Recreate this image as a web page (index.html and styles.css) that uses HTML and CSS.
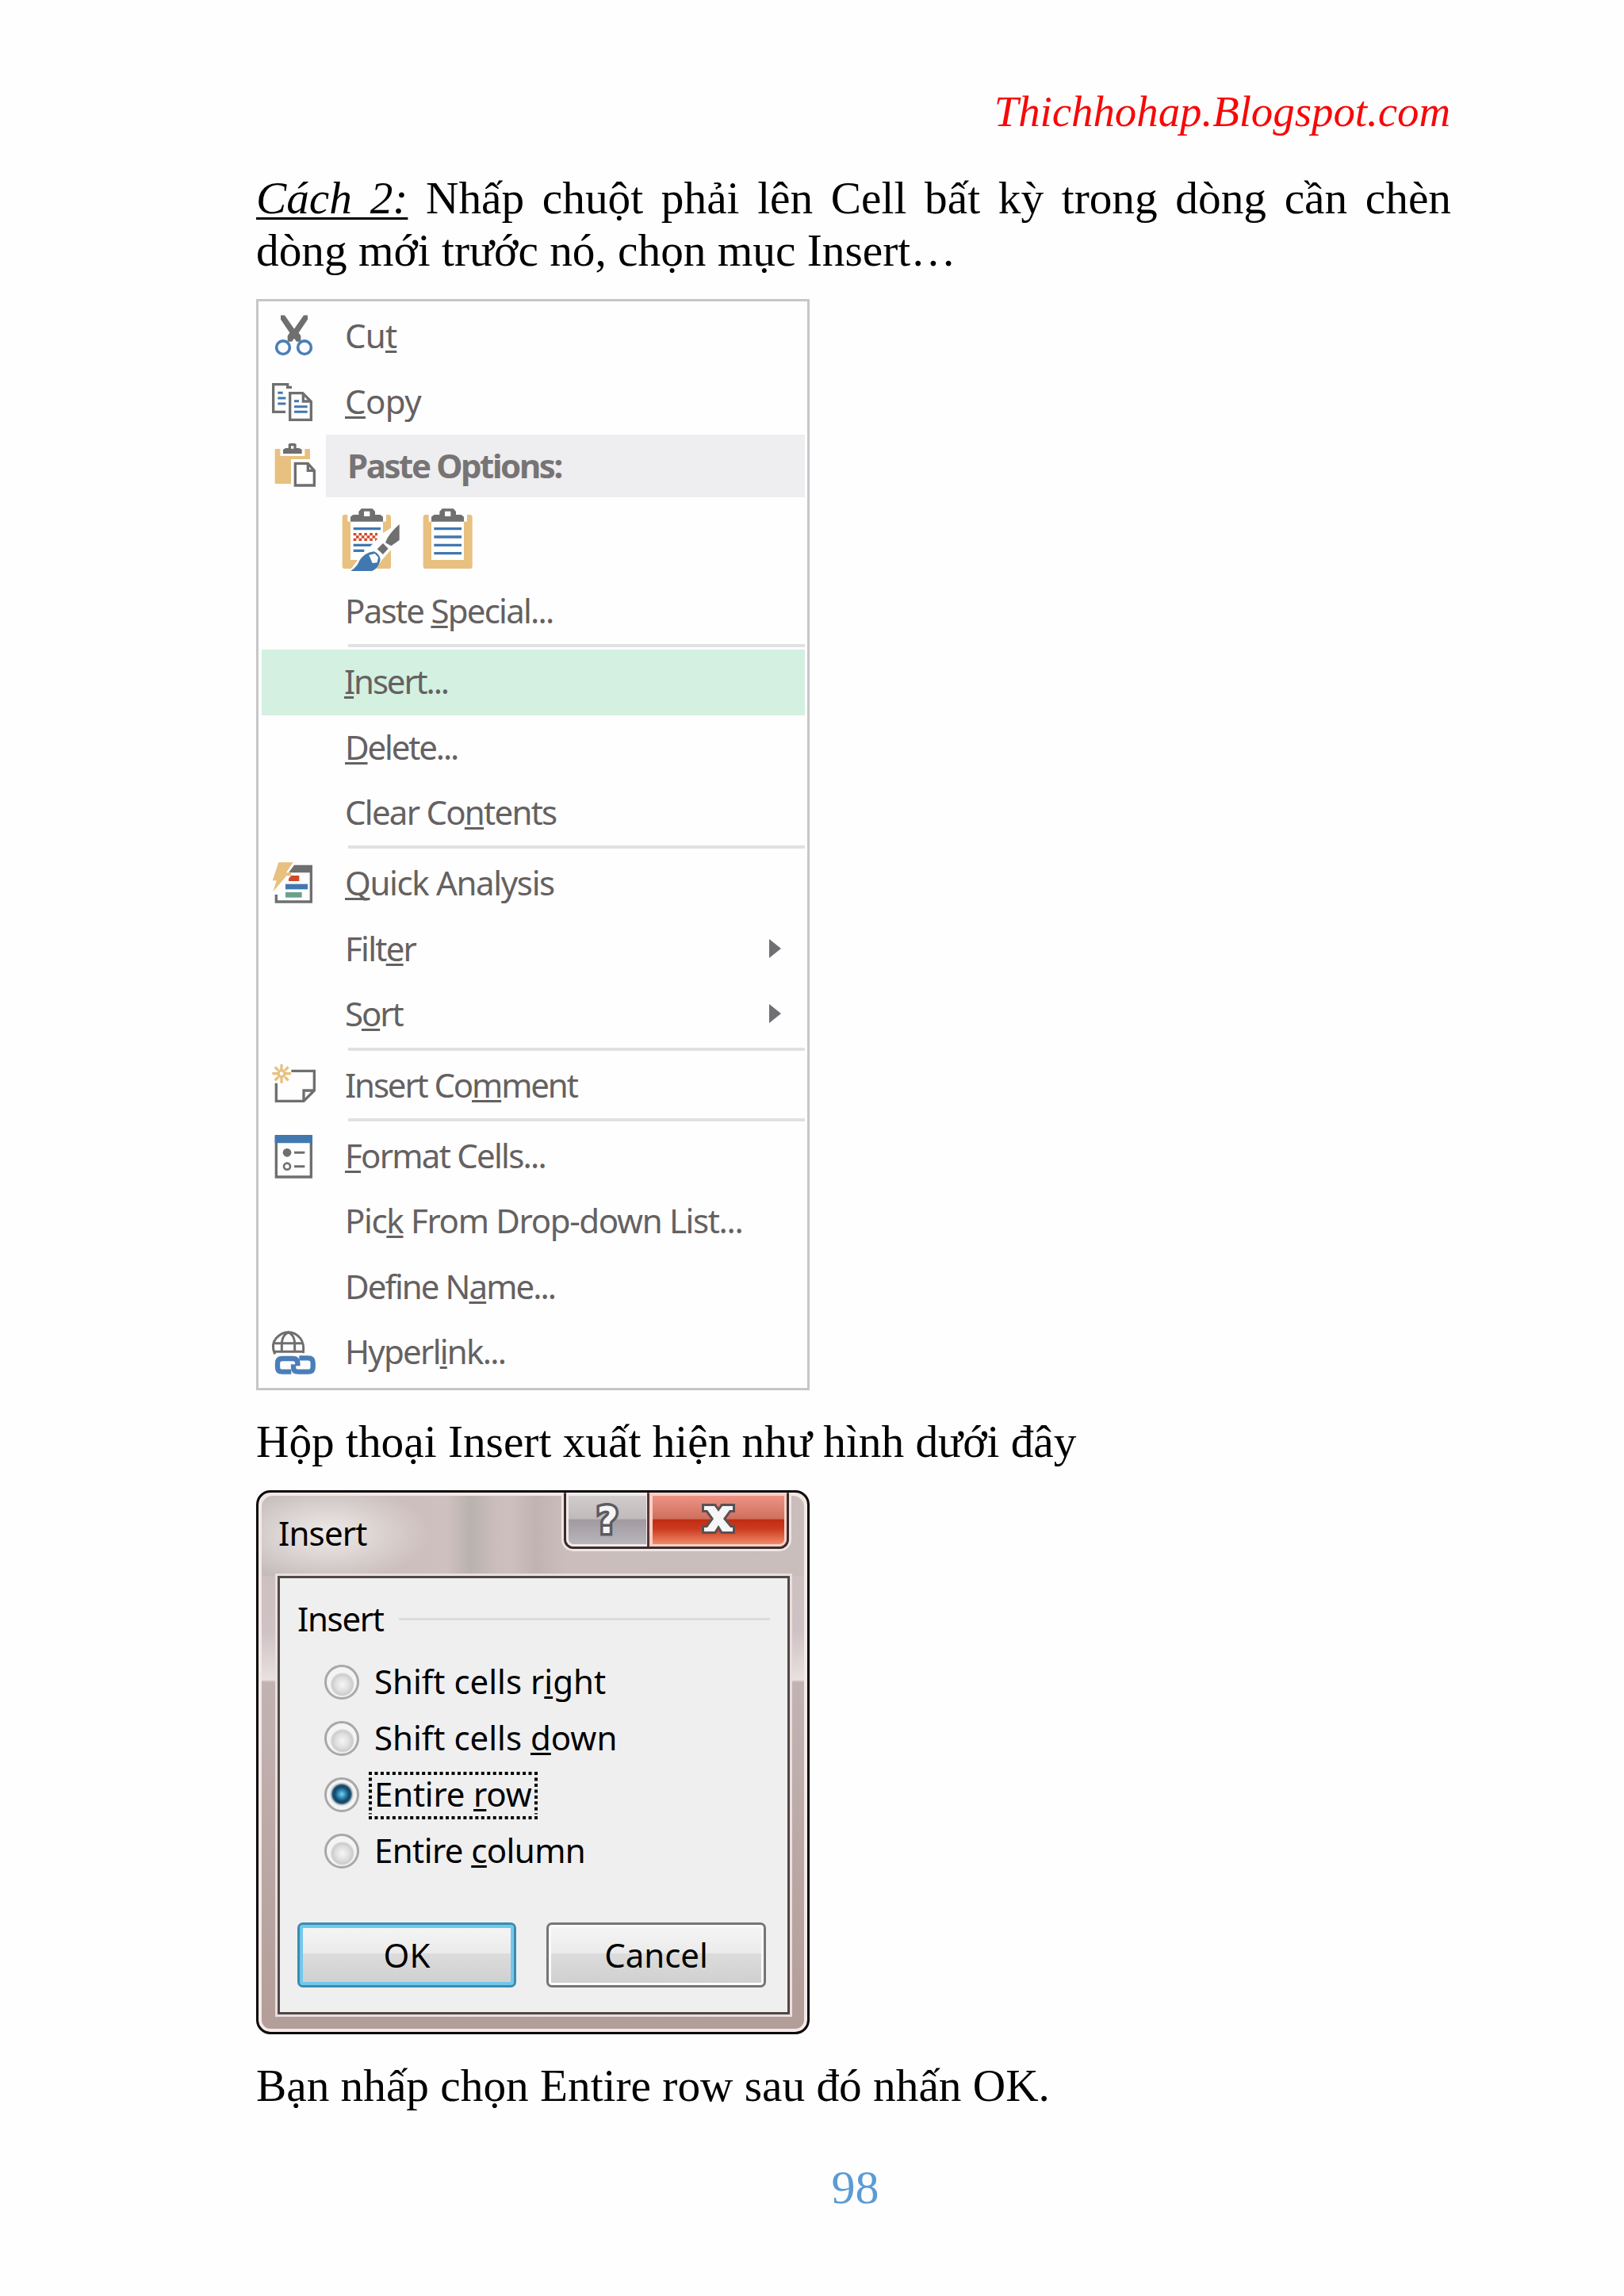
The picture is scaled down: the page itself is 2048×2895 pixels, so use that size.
FILE: index.html
```
<!DOCTYPE html>
<html lang="vi">
<head>
<meta charset="utf-8">
<title>Thichhohap.Blogspot.com</title>
<link rel="stylesheet" href="styles.css">
</head>
<body>
<main class="page">
  <header class="site">Thichhohap.Blogspot.com</header>
  <p class="para step">
    <span class="line justified"><em class="lead">Cách 2:</em> Nhấp chuột phải lên Cell bất kỳ trong dòng cần chèn</span>
    <span class="line">dòng mới trước nó, chọn mục Insert…</span>
  </p>

  <section class="menu">
    <div class="item">
      <svg class="icon" viewBox="48 40.5 246 246">
        <path d="M132 84h15l36 52 36-52h15v16l-34 50 8 12v22h-16l-9-12-9 12h-16v-22l8-12-34-50z" fill="#6f6f6f"/>
        <circle cx="141" cy="206" r="25" fill="none" stroke="#4a7eb8" stroke-width="11"/>
        <circle cx="222" cy="206" r="25" fill="none" stroke="#4a7eb8" stroke-width="11"/>
      </svg>
      <span class="label s-a">Cu<u>t</u></span>
    </div>
    <div class="item">
      <svg class="icon" viewBox="48 288 246 246">
        <g fill="none" stroke="#6f6f6f" stroke-width="10">
          <path d="M150 448H104V344h54v11h16"/>
          <path d="M167 377h48l32 32v69h-80z M217 377v31h30"/>
        </g>
        <path d="M121 376h19M121 396h30M121 417h30M183 407h18M183 428h50M183 448h50" stroke="#4178b0" stroke-width="9"/>
      </svg>
      <span class="label s-f"><u>C</u>opy</span>
    </div>
    <div class="item heading">
      <svg class="icon" viewBox="48 534 246 237">
        <path d="M114 588h16v27h93v-27h16q4 0 4 4v35h-72v93h-57q-4 0-4-4V592q0-4 4-4z" fill="#e8c080"/>
        <path d="M141 606v-16l10-5h10v-14l5-4h20l5 4v14h10l11 5v16z M171 577v10h10v-10z" fill="#6f6f6f" fill-rule="evenodd"/>
        <path d="M187 643h48l24 27v56h-72z M235 643v27h24" fill="#fff" stroke="#6f6f6f" stroke-width="10"/>
      </svg>
      <span class="label">Paste Options:</span>
    </div>
    <div class="choices">
      <svg class="choice" viewBox="360 810 230 245">
        <path d="M375 837h10v26h146v-26h8q10 0 10 10v184q0 10-10 10H375q-10 0-10-10V847q0-10 10-10z" fill="#e8c080"/>
        <path d="M396 862h123v146H396z" fill="#fff"/>
        <path d="M396 863v-18l10-8h21v-12l10-11h42l10 11v12h20l10 8v18z M447 824v19h22v-19z" fill="#6f6f6f" fill-rule="evenodd"/>
        <path d="M407 890h103M407 952h81M407 973h41" stroke="#4178b0" stroke-width="10"/>
        <path d="M407 911h91M407 931h91" stroke="#d2492a" stroke-width="10" stroke-dasharray="11 9.5"/>
        <path d="M417 921h81" stroke="#d2492a" stroke-width="10" stroke-dasharray="11 9.5"/>
        <path d="M390 1052L430 1000 520 905 581 868 592 940 512 1015 478 1052z" fill="#fff"/>
        <path d="M515 1008l34-38v61q0 10-10 10h-42z" fill="#e8c080"/>
        <path d="M581 873v60l-31 22-22-12q10-32 53-70z M519 945l20 20-20 22-22-20z" fill="#6f6f6f"/>
        <path d="M397 1050q28-20 32-38 20-32 55-36 24 9 25 32-8 34-32 42z" fill="#4178b0"/>
        <path d="M466 990l22-6 13 14-4 20-18 2z" fill="#fff"/>
      </svg>
      <svg class="choice" viewBox="667 810 230 245">
        <path d="M682 837h11v26h145v-26h10q10 0 10 10v184q0 10-10 10H682q-10 0-10-10V847q0-10 10-10z" fill="#e8c080"/>
        <path d="M703 862h123v146H703z" fill="#fff"/>
        <path d="M703 863v-18l10-8h21v-12l10-11h42l10 11v12h20l10 8v18z M754 824v19h22v-19z" fill="#6f6f6f" fill-rule="evenodd"/>
        <path d="M713 890h104M713 921h104M713 952h104M713 983h104" stroke="#4178b0" stroke-width="10"/>
      </svg>
    </div>
    <div class="item"><span class="label s-c">Paste <u>S</u>pecial...</span></div>
    <hr class="rule">
    <div class="item selected"><span class="label s-d"><u>I</u>nsert...</span></div>
    <div class="item"><span class="label s-d"><u>D</u>elete...</span></div>
    <div class="item"><span class="label s-c">Clear Co<u>n</u>tents</span></div>
    <hr class="rule">
    <div class="item">
      <svg class="icon" viewBox="48 9 246 246">
        <path d="M115 174v27h132V76" fill="none" stroke="#6f6f6f" stroke-width="10"/>
        <path d="M183 62h69v29h-90z" fill="#6f6f6f"/>
        <path d="M124 52h55l-26 39h18v12h-17l-51 60 13-42h-15z" fill="#e8c080"/>
        <path d="M172 102h30v21h-40v-10z" fill="#cf4a28"/>
        <path d="M150 134h84v20h-84z" fill="#4178b0"/>
        <path d="M150 165h62v20h-62z" fill="#69a28c"/>
      </svg>
      <span class="label s-b"><u>Q</u>uick Analysis</span>
    </div>
    <div class="item"><span class="label s-c">Filt<u>e</u>r</span><i class="arrow"></i></div>
    <div class="item"><span class="label s-d">S<u>o</u>rt</span><i class="arrow"></i></div>
    <hr class="rule">
    <div class="item">
      <svg class="icon" viewBox="48 771 246 246">
        <path d="M172 838h87v74l-40 40H115v-68 M259 912h-40v40" fill="none" stroke="#6f6f6f" stroke-width="10"/>
        <path d="M135 813v71M100 848h71M110 823l13 13M148 861l13 13M161 823l-13 13M123 861l-13 13" stroke="#e8c080" stroke-width="10"/>
        <circle cx="135" cy="848" r="12" fill="#fff" stroke="#e8c080" stroke-width="10"/>
      </svg>
      <span class="label s-d">Insert Co<u>m</u>ment</span>
    </div>
    <hr class="rule">
    <div class="item">
      <svg class="icon" viewBox="48 18 246 246">
        <path d="M115 70h132v149H115z" fill="none" stroke="#6f6f6f" stroke-width="10"/>
        <path d="M110 60h142v31H110z" fill="#4178b0"/>
        <path d="M183 127h40M183 179h40" stroke="#6f6f6f" stroke-width="9"/>
        <circle cx="156" cy="127" r="16" fill="#6f6f6f"/>
        <circle cx="156" cy="179" r="12" fill="none" stroke="#6f6f6f" stroke-width="8"/>
      </svg>
      <span class="label s-c"><u>F</u>ormat Cells...</span>
    </div>
    <div class="item"><span class="label s-b">Pic<u>k</u> From Drop-down List...</span></div>
    <div class="item"><span class="label s-g">Define N<u>a</u>me...</span></div>
    <div class="item">
      <svg class="icon" viewBox="48 759 246 246">
        <g fill="none" stroke="#6f6f6f" stroke-width="9">
          <path d="M110 889q-16-36 5-60 20-23 46-23t45 23q16 20 11 56"/>
          <path d="M106 848h110M106 880h114M136 883v-38q4-30 25-38 21 8 24 38v38"/>
        </g>
        <g fill="none" stroke="#4a7eb8" stroke-width="19">
          <path d="M172 956h-34q-18 0-18-18v-14q0-18 18-18h40q18 0 18 18v10"/>
          <path d="M202 904h34q18 0 18 18v16q0 18-18 18h-38q-18 0-18-18v-10"/>
        </g>
      </svg>
      <span class="label s-c">Hyperl<u>i</u>nk...</span>
    </div>
  </section>

  <p class="para">Hộp thoại Insert xuất hiện như hình dưới đây</p>

  <section class="dialog">
    <div class="titlebar">
      <span class="title">Insert</span>
      <div class="caption">
        <span class="help">?</span>
        <span class="close">
          <svg class="cross" viewBox="0 0 42 38"><path d="M3 3h13l5 7 5-7h13v5h-4l-8 11 9 11h3v5H26l-5-8-5 8H3v-5h4l8-11L7 8H3z" fill="#f6f6f6" stroke="#5b5052" stroke-width="6" paint-order="stroke"/></svg>
        </span>
      </div>
    </div>
    <div class="panel">
      <div class="legend"><span>Insert</span><i></i></div>
      <div class="radio"><b class="dot"></b><span class="name">Shift cells r<u>i</u>ght</span></div>
      <div class="radio"><b class="dot"></b><span class="name">Shift cells <u>d</u>own</span></div>
      <div class="radio"><b class="dot on"></b><span class="name s-e">Entire <u>r</u>ow<svg class="focus" viewBox="0 0 213 60"><path d="M0 2h213M0 58h213M2 7.5v46M211 7.5v46" stroke="#000" stroke-width="4" stroke-dasharray="4 3.464"/></svg></span></div>
      <div class="radio"><b class="dot"></b><span class="name s-f">Entire <u>c</u>olumn</span></div>
      <div class="actions">
        <button class="btn primary">OK</button>
        <button class="btn">Cancel</button>
      </div>
    </div>
  </section>

  <p class="para">Bạn nhấp chọn Entire row sau đó nhấn OK.</p>
  <footer class="folio">98</footer>
</main>
</body>
</html>
```
FILE: styles.css
```
* { box-sizing: border-box; }

body {
  margin: 0;
  background: #fefefe;
  color: #000;
  font-family: "Liberation Serif", serif;
}

.page {
  width: 2048px;
  height: 2895px;
  padding: 108.4px 218px 0 323px;
  overflow: hidden;
}

.site {
  padding-right: 1px;
  font-size: 54.8px;
  line-height: 66px;
  font-style: italic;
  text-align: right;
  color: #f80808;
}

.para {
  margin: 0;
  font-size: 57.3px;
  line-height: 66px;
  white-space: nowrap;
}

.step { margin-top: 42.6px; }
.line { display: block; }
.justified { text-align: justify; text-align-last: justify; white-space: normal; }

.lead {
  text-decoration: underline;
  text-decoration-thickness: 3px;
  text-underline-offset: 5px;
  text-decoration-skip-ink: none;
}

/* context menu */
.menu {
  width: 698px;
  height: 1376px;
  margin: 28px 0 31.7px;
  padding: 3.5px 3px 0;
  border: 3px solid #c6c6c8;
  background: #fefefe;
  font-family: "Noto Sans", "Open Sans", sans-serif;
  font-size: 42px;
  color: #656161;
}

.menu u, .dialog u {
  text-decoration-thickness: 3px;
  text-underline-offset: 3px;
  text-decoration-skip-ink: none;
}

.item {
  display: grid;
  grid-template-columns: 82px 1fr auto;
  height: 82.4px;
  margin: 0 0 0 -3px;
}

.icon { width: 82px; height: 82px; grid-column: 1; }

.label {
  grid-column: 2;
  padding-left: 27px;
  line-height: 79px;
  white-space: pre;
}

.s-a { letter-spacing: -.8px; }
.s-b { letter-spacing: -1.35px; }
.s-c { letter-spacing: -1.75px; }
.s-d { letter-spacing: -2.15px; }
.s-e { letter-spacing: -.2px; }
.s-f { letter-spacing: -.6px; }
.s-g { letter-spacing: -1.95px; }

.heading { height: 79px; }
.heading .icon { height: 79px; }
.heading .label {
  margin-left: 3px;
  background: #eeedef;
  color: #767474;
  font-weight: 700;
  line-height: 77.5px;
  letter-spacing: -2.4px;
}

.choices {
  display: flex;
  gap: 25.6px;
  height: 102.5px;
  padding: 13px 0 0 101px;
}

.choice { width: 76.7px; height: 81.7px; }

.rule {
  height: 4px;
  margin: 0 0 3px 110px;
  border: 0;
  background: #e1e0e3;
}

.selected { margin-left: 1px; background: #d3f0e1; }
.selected .label { margin-left: -5px; }

.arrow {
  align-self: start;
  margin: 28px 30px 0 0;
  border-style: solid;
  border-width: 12px 0 12px 15px;
  border-color: transparent transparent transparent #707074;
}

/* Insert dialog */
.dialog {
  width: 698px;
  height: 686px;
  margin: 28.7px 0 31.6px;
  padding: 0 22px 22px 24px;
  border: 3px solid #0c0a0a;
  border-radius: 18px;
  background: linear-gradient(#c3b8b6 0, #cdc0bf 90px, #cfc2c5 175px, #e8e1df 236px, #c2b3b3 239px, #b39d98 100%);
  box-shadow: inset 0 0 0 4px #f4e9e7;
  font-family: "Noto Sans", "Open Sans", sans-serif;
  font-size: 42px;
}

.titlebar {
  display: flex;
  justify-content: space-between;
  height: 105px;
  margin: 0 -18px 0 -20px;
  padding: 0 19px 0 21px;
  background:
    radial-gradient(ellipse 130px 62px at 82px 52px, #eeeae8 0, #eeeae800 100%),
    linear-gradient(90deg, #c4bcba 0, #cdbfbd 30%, #cfc1bf 34%, #b9b2ae 38.5%, #cabdbb 43%, #cdbfbd 46%, #c0b3b1 50.5%, #cabdbb 56%, #c9bebc 100%);
  box-shadow: inset 0 4px 0 #f4e9e7;
  border-radius: 14px 14px 0 0;
}

.title { line-height: 101px; letter-spacing: -.8px; }

.caption {
  display: flex;
  width: 284px;
  height: 71px;
  border: 3px solid #3a2c2d;
  border-top: 0;
  border-radius: 0 0 12px 12px;
  box-shadow: 0 0 0 3px #efe5e3;
  clip-path: inset(0 -4px -4px -4px);
}

.help, .close { display: flex; align-items: center; justify-content: center; }

.help {
  width: 105px;
  border: solid #f0eaea;
  border-width: 4px 4px 3px 3px;
  border-bottom-left-radius: 9px;
  background: linear-gradient(#d2cccc, #bfbabb 48%, #a09a9f 49%, #b9b5bb 100%);
  color: #f6f6f6;
  font: bold 46px/1 "DejaVu Sans", sans-serif;
  -webkit-text-stroke: 7px #5d5a60;
  paint-order: stroke fill;
}

.close {
  flex: 1;
  border: solid #f9cfc5;
  border-width: 4px 3px 3px 4px;
  border-bottom-right-radius: 9px;
  background: linear-gradient(#ee9385, #cf6f5e 48%, #bf2c12 49%, #cb3a1f 68%, #f08a68 100%);
  box-shadow: -3px 0 0 #5a3433;
}

.cross { width: 42px; height: 38px; margin-bottom: 3px; }

.panel {
  height: 553px;
  padding: 20.7px 0 0 22px;
  border: 3px solid #4e4846;
  background: #f0eff0;
  box-shadow: 0 0 0 3px #eadfdd;
}

.legend {
  display: flex;
  align-items: center;
  height: 60px;
  margin-bottom: 14.8px;
  line-height: 62px;
  letter-spacing: -1.3px;
}

.legend span { width: 128px; }
.legend i { width: 468px; height: 3px; background: #dcdcde; }

.radio { display: flex; height: 71.1px; padding-left: 34px; }
.name { position: relative; line-height: 68px; white-space: pre; }

.dot {
  width: 44px;
  height: 44px;
  margin: 13px 19px 0 0;
  border: 3px solid #a8a8a8;
  border-radius: 50%;
  background: radial-gradient(circle at 52% 58%, #f6f6f6 0, #dedede 30%, #cccccc 44%, #f4f4f4 52%, #f4f4f4 100%);
}

.dot.on {
  background: radial-gradient(circle at 50% 48%, #7fd3ee 0, #3791bb 16%, #14486c 33%, #1d4f70 42%, #b9c2c8 49%, #f4f4f4 56%);
}

.focus { position: absolute; left: -7px; top: 6px; width: 213px; height: 60px; }

.actions { display: flex; gap: 38px; margin-top: 54px; }

.btn {
  width: 277px;
  height: 82px;
  padding: 0 0 2px;
  border: 3px solid #757575;
  border-radius: 7px;
  background: linear-gradient(#f5f5f5, #ebebeb 47%, #dcdcdc 48%, #cfcfcf);
  box-shadow: inset 0 0 0 3px #fbfbfb;
  font: 42px/73px "Noto Sans", "Open Sans", sans-serif;
  color: #000;
}

.primary {
  width: 276px;
  border-color: #3a8cb0;
  box-shadow: inset 0 0 0 4px #72c8ea;
}

.folio {
  margin-top: 62.5px;
  padding-left: 4px;
  font-size: 60px;
  line-height: 66px;
  text-align: center;
  color: #5b9bd5;
}
```
